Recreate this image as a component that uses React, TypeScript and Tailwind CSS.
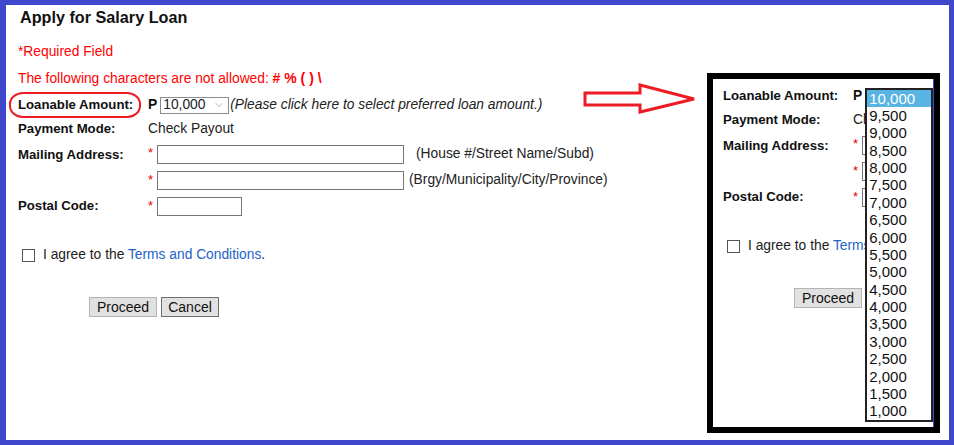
import { ChevronDown } from 'lucide-react';

const amounts = [
  '10,000', '9,500', '9,000', '8,500', '8,000', '7,500', '7,000', '6,500', '6,000', '5,500',
  '5,000', '4,500', '4,000', '3,500', '3,000', '2,500', '2,000', '1,500', '1,000',
];

function FormBody({ open = false }: { open?: boolean }) {
  return (
    <div className="w-[640px] shrink-0 whitespace-nowrap">
      {/* Loanable amount */}
      <div className="flex items-center h-6">
        <div className="w-[130px] font-bold text-[13.2px] text-[#111]">Loanable Amount:</div>
        <span className="font-bold text-[#111]">P</span>
        <div className="relative ml-[3px]">
          <div className="w-[69px] h-[17px] border border-[#8c8c8c] flex items-center justify-between pl-[2px] pr-[3px] bg-white">
            <span>10,000</span>
            <ChevronDown className="w-3 h-3 text-[#999]" strokeWidth={1.5} />
          </div>
          {open && (
            <div className="absolute top-0 left-0 z-10 w-[68px] h-[334px] border-2 border-[#222] bg-white text-[15px] leading-[17.37px] text-[#111]">
              {amounts.map((a, i) => (
                <div key={a} className={i === 0 ? 'bg-[#58b4e2] text-white pl-[2px]' : 'pl-[2px]'}>
                  {a}
                </div>
              ))}
            </div>
          )}
        </div>
        <span className="italic ml-px">(Please click here to select preferred loan amount.)</span>
      </div>

      {/* Payment mode */}
      <div className="flex items-center h-6">
        <div className="w-[130px] font-bold text-[13.2px] text-[#111]">Payment Mode:</div>
        <span>Check Payout</span>
      </div>

      {/* Mailing address */}
      <div className="flex items-center h-[26px]">
        <div className="w-[130px] font-bold text-[13.2px] text-[#111] self-start pt-[4px]">Mailing Address:</div>
        <span className="text-[#e00] text-[13px] w-[9px] self-start pt-[2px]">*</span>
        <div className="w-[247px] h-[19px] border border-[#767676] bg-white" />
        <span className="ml-3">(House #/Street Name/Subd)</span>
      </div>
      <div className="flex items-center h-[26px]">
        <div className="w-[130px]" />
        <span className="text-[#e00] text-[13px] w-[9px] self-start pt-[3px]">*</span>
        <div className="w-[247px] h-[19px] border border-[#767676] bg-white" />
        <span className="ml-[5px]">(Brgy/Municipality/City/Province)</span>
      </div>

      {/* Postal code */}
      <div className="flex items-center h-[26px]">
        <div className="w-[130px] font-bold text-[13.2px] text-[#111]">Postal Code:</div>
        <span className="text-[#e00] text-[13px] w-[9px] self-start pt-[3px]">*</span>
        <div className="w-[85px] h-[19px] border border-[#767676] bg-white" />
      </div>

      {/* Terms */}
      <div className="flex items-center h-6 mt-6 pl-1">
        <div className="w-[13px] h-[13px] border border-[#555] bg-white" />
        <span className="ml-2">
          I agree to the <span className="text-[#1e63c6]">Terms and Conditions</span>.
        </span>
      </div>

      {/* Buttons */}
      <div className="flex gap-1 mt-[30px] pl-[71px]">
        <button className="h-5 w-[68px] bg-[#e1e1e1] border border-[#b4b4b4] text-[14px] leading-none text-[#111]">
          Proceed
        </button>
        <button className="h-5 w-[58px] bg-[#e1e1e1] border border-[#6f6f6f] text-[14px] leading-none text-[#111]">
          Cancel
        </button>
      </div>
    </div>
  );
}

export default function App() {
  return (
    <div className="relative w-[954px] h-[445px] flex bg-white overflow-hidden border-[#3f48cc] border-l-[6px] border-t-[5px] border-r-[5px] border-b-[5px] font-['Liberation_Sans',Arial,sans-serif] text-[13.8px] text-[#222]">
      {/* Main form */}
      <div className="flex-1 pl-3">
        <h1 className="pl-[2px] text-[16.2px] leading-6 font-bold text-[#111]">Apply for Salary Loan</h1>
        <p className="mt-[15px] leading-4 text-[#f00]">*Required Field</p>
        <p className="mt-[10px] leading-4 text-[#f00]">
          The following characters are not allowed: <span className="font-bold text-[14px]">#&nbsp;%&nbsp;(&nbsp;)&nbsp;\</span>
        </p>
        <div className="mt-[6px]">
          <FormBody />
        </div>
      </div>

      {/* Zoomed dropdown panel */}
      <div className="relative shrink-0 w-[233px] h-[360px] mt-[68px] mr-[9px] border-[6px] border-black overflow-hidden bg-white">
        <div className="pl-[10px] pt-[5px]">
          <FormBody open />
        </div>
        <div className="absolute top-0 right-0 w-px h-full bg-[#3f48cc] z-20" />
      </div>

      {/* Annotations */}
      <div className="absolute left-[3px] top-[87px] w-[132px] h-[26px] border-2 border-[#ed1c24] rounded-[14px/12px]" />
      <svg className="absolute left-[574px] top-[75px]" width="120" height="40" viewBox="0 0 120 40">
        <polygon
          points="5,13 60,13 60,5 114,19 60,32 60,25 5,25"
          fill="white"
          stroke="#ed1c24"
          strokeWidth="3"
          strokeLinejoin="miter"
        />
      </svg>
    </div>
  );
}
